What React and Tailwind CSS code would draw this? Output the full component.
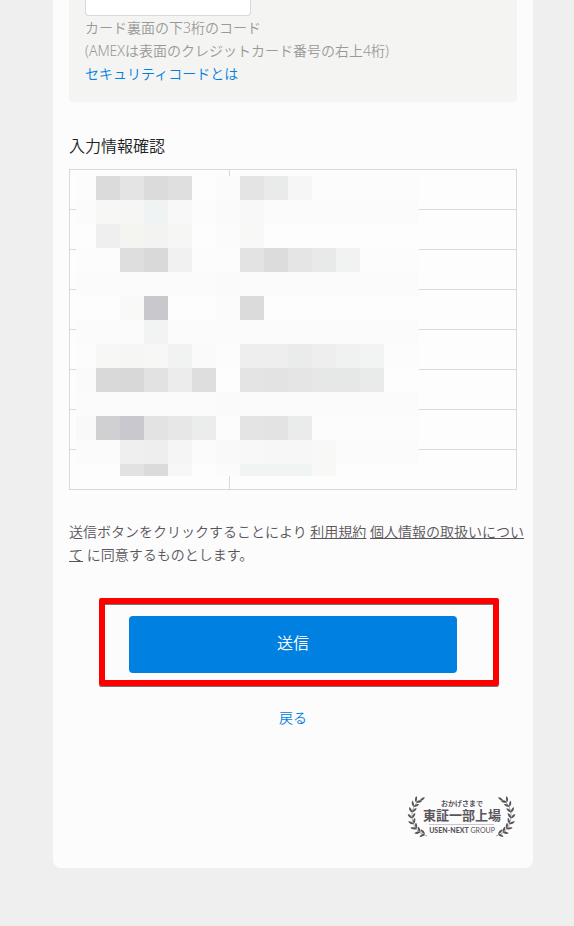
import React from 'react';

// One string per mosaic row, "-" keeps the row's base colour
const MOSAIC = [
    { base: '#fcfcfc', cells: '- dbdbdb e4e4e4 dbdbdb dfdfdf fdfdfd fbfbfb e4e4e4 e9ebea f6f6f6' },
    { base: '#fbfbfb', cells: '- f7f7f5 f6f6f4 f0f3f3 f8f8f8 fcfcfc fafafa f8f8f8' },
    { base: '#fdfdfd', cells: '- efefef f4f4f1 f3f3f1 f6f6f4 - fbfbfb f8f8f6' },
    { base: '#fcfcfc', cells: '- - dedede d9d9d9 f1f1f1 - - e3e3e3 dcdcdc e5e5e5 e7eae9 f0f3f2' },
    { base: '#fbfbfb', cells: '- - - - - - fafafa' },
    { base: '#fdfdfd', cells: '- - f9f9f8 c8c8cd - - fbfbfb dbdbdb' },
    { base: '#fbfbfb', cells: '- - - f2f4f3' },
    { base: '#fcfcfc', cells: '- f7f7f5 f6f6f4 f7f7f5 f0f3f2 fafafa - eeeeee eeeeee e9eceb eeeeee f0f2f1 f1f4f3' },
    { base: '#fdfdfd', cells: 'fafafa d9d9d9 d8d8d8 e2e2e2 ececec dedede - e4e4e4 e3e3e3 e5e5e5 e6e8e7 e6e8e7 e8ebea' },
    { base: '#fbfbfb', cells: '- - - - - - fafafa' },
    { base: '#fcfcfc', cells: 'f9f9f9 d0d0d3 c8c8ce e3e3e3 e7e7e7 eaedec - e4e4e4 e3e3e3 e9eceb' },
    { base: '#fbfbfb', cells: '- - efefef eeeeee f5f5f5 - f9f9f9 f8f8f8 f7f7f7 f7f7f7 f8f8f7' },
    { base: '#fdfdfd', cells: '- - e2e2e2 dbdbdb f7f7f7 - fbfbfb f0f4f2 f0f4f2 f0f4f2 f8f8f6' },
];

const Mosaic = () => (
    <div className="absolute left-[7px] top-[7px] grid w-[343px] grid-cols-[20px_repeat(13,24px)_11px] grid-rows-[repeat(12,24px)_12px]">
        {MOSAIC.map((row, r) => {
            const colors = row.cells.split(' ');
            return Array.from({ length: 15 }, (_, c) => (
                <div
                    key={`${r}-${c}`}
                    style={{ backgroundColor: colors[c] && colors[c] !== '-' ? `#${colors[c]}` : row.base }}
                />
            ));
        })}
    </div>
);

const LEAF = 'M0 0C1.4 -1.6 4.4 -1.7 6.2 0C4.4 1.2 1.4 1.2 0 0Z';

// Leaves grow in pairs along an arc that runs from the foot up to the tip
const Laurel = () => {
    const steps = [98, 116, 134, 152, 170, 188, 206, 222];
    const at = (deg) => {
        const a = (deg * Math.PI) / 180;
        return [21 + 15 * Math.cos(a), 19 + 19 * Math.sin(a)];
    };
    return (
        <g fill="#59555b">
            <path d="M21 40C11 37 6 29 6 19C6 12 10 6 16 3" fill="none" stroke="#59555b" strokeWidth="0.5" />
            {steps.map((deg) => {
                const [x, y] = at(deg);
                return (
                    <g key={deg} transform={`translate(${x} ${y}) rotate(${deg + 90})`}>
                        <path d={LEAF} transform="rotate(-36)" />
                        <path d={LEAF} transform="rotate(40)" />
                    </g>
                );
            })}
            <path d={LEAF} transform="translate(14 5) rotate(-38)" />
        </g>
    );
};

const ListingBadge = () => (
    <svg viewBox="0 0 111 42" className="h-[42px] w-[111px]" role="img" aria-label="東証一部上場 USEN-NEXT GROUP">
        <Laurel />
        <g transform="translate(111 0) scale(-1 1)">
            <Laurel />
        </g>
        <g fill="#59555b" textAnchor="middle" fontFamily="'Noto Sans CJK JP', sans-serif">
            <text x="56" y="10" fontSize="7" fontWeight="700">おかげさまで</text>
            <text x="56" y="24" fontSize="13" fontWeight="700">東証一部上場</text>
            <text x="56" y="37" fontSize="7" fontFamily="Lato, sans-serif" fontWeight="400">
                <tspan fontWeight="900">USEN-NEXT</tspan> GROUP
            </text>
        </g>
        <path d="M23 28.5H88" stroke="#c9c8ca" strokeWidth="1" />
    </svg>
);

const App = () => {
    return (
        <div className="flex min-h-screen items-start justify-center bg-[#efefef] pl-3 font-['Noto_Sans','Noto_Sans_CJK_JP',sans-serif] text-[14px] leading-[23px] font-[350] text-[#59555b]">
            <main className="w-full max-w-[480px] rounded-b-lg bg-[#fcfcfc] px-4 pb-[30px]">
                {/* Security code */}
                <section className="rounded-b bg-[#f4f4f2] px-4 pb-[17px] text-[#999]">
                    <input
                        type="text"
                        aria-label="セキュリティコード"
                        className="block h-4 w-[166px] rounded-b border border-t-0 border-[#d9d9d9] bg-white px-2"
                    />
                    <p>カード裏面の下3桁のコード</p>
                    <p>(AMEXは表面のクレジットカード番号の右上4桁)</p>
                    <a href="#security-code" className="block text-[#0080e0]">セキュリティコードとは</a>
                </section>

                {/* Confirmation */}
                <h2 className="mt-8 mb-[11px] text-[16px] leading-6 text-[#222]">入力情報確認</h2>
                <div className="relative">
                    <table className="w-full table-fixed border-collapse border border-[#d9d9d9] bg-[#fdfdfd]">
                        <tbody>
                            {Array.from({ length: 8 }, (_, i) => (
                                <tr key={i} className="h-10 border-b border-[#d9d9d9]">
                                    <th className="w-40 border-r border-[#d9d9d9]" />
                                    <td />
                                </tr>
                            ))}
                        </tbody>
                    </table>
                    <Mosaic />
                </div>

                <p className="mt-[30px] -mr-2">
                    送信ボタンをクリックすることにより <a href="#terms" className="underline">利用規約</a>{' '}
                    <a href="#privacy" className="underline">個人情報の取扱いについて</a> に同意するものとします。
                </p>

                {/* Submit */}
                <div className="relative mx-15 mt-[50px]">
                    <button type="submit" className="block h-[57px] w-full rounded bg-[#0080e0] pb-0.5 text-[16px] text-white">
                        送信
                    </button>
                    <div className="pointer-events-none absolute -top-[18px] -right-[42px] -bottom-[13px] -left-[30px] rounded-xs border-6 border-[#f00] shadow-[0_1px_0_#777,inset_0_1px_0_#777]" />
                </div>
                <div className="mt-[33px] text-center">
                    <a href="#back" className="text-[#0080e0]">戻る</a>
                </div>

                <div className="mt-[67px] flex justify-end">
                    <ListingBadge />
                </div>
            </main>
        </div>
    );
};

export default App;
